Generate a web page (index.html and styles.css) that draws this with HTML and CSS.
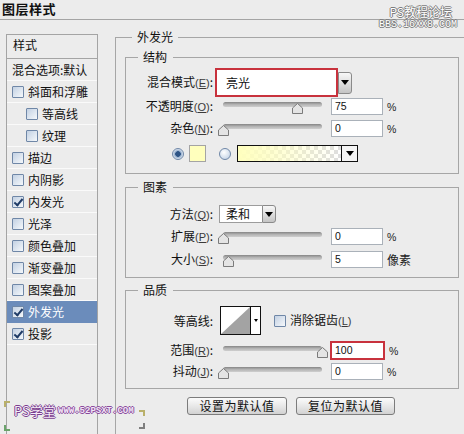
FILE: index.html
```html
<!DOCTYPE html>
<html lang="zh-CN">
<head>
<meta charset="utf-8">
<title>图层样式</title>
<link rel="stylesheet" href="styles.css">
</head>
<body>
<header class="titlebar"><h1 class="title">图层样式</h1></header>
<div class="wm-top"><span class="wm-l1">PS教程论坛</span><span class="wm-l2">BBS.16XX8.COM</span></div>
<div class="main">
  <nav class="sidebar">
    <div class="side-head">样式</div>
    <div class="side-row blend">混合选项:默认</div>
    <div class="side-row"><span class="cb"></span>斜面和浮雕</div>
    <div class="side-row sub"><span class="cb"></span>等高线</div>
    <div class="side-row sub"><span class="cb"></span>纹理</div>
    <div class="side-row"><span class="cb"></span>描边</div>
    <div class="side-row"><span class="cb"></span>内阴影</div>
    <div class="side-row"><span class="cb on"></span>内发光</div>
    <div class="side-row"><span class="cb"></span>光泽</div>
    <div class="side-row"><span class="cb"></span>颜色叠加</div>
    <div class="side-row"><span class="cb"></span>渐变叠加</div>
    <div class="side-row"><span class="cb"></span>图案叠加</div>
    <div class="side-row active"><span class="cb on"></span>外发光</div>
    <div class="side-row"><span class="cb on"></span>投影</div>
  </nav>

  <fieldset class="outer">
    <legend class="lg-outer">外发光</legend>

    <fieldset class="group g-struct">
      <legend class="lg">结构</legend>
      <div class="row r-mode">
        <span class="lbl">混合模式<span class="mn">(<u>E</u>)</span>:</span>
        <span class="select hl">亮光</span><span class="dd dd-tall"><span class="tri"></span></span>
      </div>
      <div class="row r-17 mt1">
        <span class="lbl">不透明度<span class="mn">(<u>O</u>)</span>:</span>
        <span class="slider"><span class="track"></span><span class="thumb" style="left:77px"><svg width="11" height="11" viewBox="0 0 11 11"><polygon points="5.5,0.5 10.5,5 10.5,10.5 0.5,10.5 0.5,5" fill="#e4e4e4" stroke="#7b7b7b"/></svg></span></span>
        <span class="num">75</span><span class="unit">%</span>
      </div>
      <div class="row r-17 mt5">
        <span class="lbl">杂色<span class="mn">(<u>N</u>)</span>:</span>
        <span class="slider"><span class="track"></span><span class="thumb" style="left:3px"><svg width="11" height="11" viewBox="0 0 11 11"><polygon points="5.5,0.5 10.5,5 10.5,10.5 0.5,10.5 0.5,5" fill="#e4e4e4" stroke="#7b7b7b"/></svg></span></span>
        <span class="num">0</span><span class="unit">%</span>
      </div>
      <div class="row r-17 mt8 r-color">
        <span class="radio on"></span>
        <span class="swatch"></span>
        <span class="radio"></span>
        <span class="grad"><span class="grad-fill"></span><span class="grad-dd"><span class="tri"></span></span></span>
      </div>
    </fieldset>

    <fieldset class="group g-elem">
      <legend class="lg">图素</legend>
      <div class="row r-18 mt11">
        <span class="lbl">方法<span class="mn">(<u>Q</u>)</span>:</span>
        <span class="select sm">柔和</span><span class="dd dd-sm"><span class="tri"></span></span>
      </div>
      <div class="row r-17 mt5">
        <span class="lbl">扩展<span class="mn">(<u>P</u>)</span>:</span>
        <span class="slider"><span class="track"></span><span class="thumb" style="left:3px"><svg width="11" height="11" viewBox="0 0 11 11"><polygon points="5.5,0.5 10.5,5 10.5,10.5 0.5,10.5 0.5,5" fill="#e4e4e4" stroke="#7b7b7b"/></svg></span></span>
        <span class="num">0</span><span class="unit">%</span>
      </div>
      <div class="row r-17 mt6">
        <span class="lbl">大小<span class="mn">(<u>S</u>)</span>:</span>
        <span class="slider"><span class="track"></span><span class="thumb" style="left:8px"><svg width="11" height="11" viewBox="0 0 11 11"><polygon points="5.5,0.5 10.5,5 10.5,10.5 0.5,10.5 0.5,5" fill="#e4e4e4" stroke="#7b7b7b"/></svg></span></span>
        <span class="num">5</span><span class="unit cjk">像素</span>
      </div>
    </fieldset>

    <fieldset class="group g-qual">
      <legend class="lg">品质</legend>
      <div class="row r-29 mt9">
        <span class="lbl">等高线:</span>
        <span class="contour"><svg class="graph" width="29" height="27" viewBox="0 0 29 27"><rect width="29" height="27" fill="#fff"/><polygon points="0,27 29,0 29,27" fill="#a3a3a3"/></svg><span class="cdd"><span class="tri tri-sm"></span></span></span>
        <span class="cb cb-aa"></span><span class="aa">消除锯齿<span class="mn">(<u>L</u>)</span></span>
      </div>
      <div class="row r-19 mt6">
        <span class="lbl">范围<span class="mn">(<u>R</u>)</span>:</span>
        <span class="slider"><span class="track"></span><span class="thumb" style="left:102px"><svg width="11" height="11" viewBox="0 0 11 11"><polygon points="5.5,0.5 10.5,5 10.5,10.5 0.5,10.5 0.5,5" fill="#e4e4e4" stroke="#7b7b7b"/></svg></span></span>
        <span class="num hl-num">100</span><span class="unit">%</span>
      </div>
      <div class="row r-17 mt3">
        <span class="lbl">抖动<span class="mn">(<u>J</u>)</span>:</span>
        <span class="slider"><span class="track"></span><span class="thumb" style="left:3px"><svg width="11" height="11" viewBox="0 0 11 11"><polygon points="5.5,0.5 10.5,5 10.5,10.5 0.5,10.5 0.5,5" fill="#e4e4e4" stroke="#7b7b7b"/></svg></span></span>
        <span class="num">0</span><span class="unit">%</span>
      </div>
    </fieldset>

    <div class="btnrow">
      <span class="btn">设置为默认值</span>
      <span class="btn btn2">复位为默认值</span>
    </div>
  </fieldset>
</div>

<div class="wm-bottom">
  <span class="mark mark-tl"></span>
  <span class="mark mark-bl"></span>
  <span class="wm-ps">PS学堂</span>
  <span class="wm-url">WWW.52PSXT.COM</span>
  <span class="mark mark-tr"></span>
  <span class="mark mark-br"></span>
</div>
</body>
</html>
```

FILE: styles.css
```css
* { box-sizing: border-box; margin: 0; padding: 0; }

html, body {
  width: 464px;
  height: 434px;
  overflow: hidden;
  background: #ececec;
}

body {
  position: relative;
  font-family: "Noto Sans CJK SC", "Noto Sans", sans-serif;
  font-size: 12px;
  line-height: 14px;
  color: #111;
}

/* title bar */
.titlebar {
  height: 20px;
  border-bottom: 1px solid #a4a4a4;
  padding: 0 0 0 2px;
}
.title {
  font-size: 13px;
  font-weight: bold;
  line-height: 17px;
  letter-spacing: 0.5px;
}

/* watermarks */
.wm-top {
  position: absolute;
  top: 4px;
  right: 7px;
  display: flex;
  flex-direction: column;
  align-items: flex-end;
  color: #fff;
  text-shadow: 1px 0 #7d7d7d, -1px 0 #7d7d7d, 0 1px #7d7d7d, 0 -1px #7d7d7d;
}
.wm-l1 { font-size: 12px; line-height: 15px; padding-right: 5px; }
.wm-l2 { font-family: "Liberation Mono", monospace; font-size: 10px; line-height: 11px; }

.wm-bottom {
  position: absolute;
  left: 4px;
  top: 400px;
  width: 140px;
  height: 32px;
}
.wm-ps {
  position: absolute;
  left: 10px;
  top: 3px;
  font-size: 13px;
  line-height: 15px;
  color: #f5ecf8;
  text-shadow: 1px 0 #7b3f90, -1px 0 #7b3f90, 0 1px #7b3f90, 0 -1px #7b3f90;
}
.wm-url {
  position: absolute;
  left: 54px;
  top: 6px;
  font-family: "Liberation Mono", monospace;
  font-weight: bold;
  font-size: 9px;
  line-height: 10px;
  color: #f1e6f6;
  text-shadow: 1px 0 #8a4a9d, -1px 0 #8a4a9d, 0 1px #8a4a9d, 0 -1px #8a4a9d;
}
.mark { position: absolute; width: 6px; height: 6px; }
.mark-tl { left: 0; top: 1px; border-top: 2px solid #b9b06a; border-left: 2px solid #b9b06a; }
.mark-bl { left: 0; top: 25px; border-bottom: 2px solid #6aa36a; border-left: 2px solid #6aa36a; }
.mark-tr { left: 135px; top: 10px; border-top: 2px solid #b9b06a; border-right: 2px solid #b9b06a; }
.mark-br { left: 135px; top: 23px; border-bottom: 2px solid #7e7e7e; border-right: 2px solid #7e7e7e; }

/* layout */
.main {
  display: flex;
  align-items: flex-start;
}

/* sidebar */
.sidebar {
  flex: none;
  width: 92px;
  height: 400px;
  margin: 14px 0 0 6px;
  border: 1px solid #a4a4a4;
  border-bottom: 0;
}
.side-head {
  height: 24px;
  line-height: 20px;
  padding-left: 6px;
  border-bottom: 1px solid #a4a4a4;
}
.side-row {
  display: flex;
  align-items: center;
  height: 22px;
  padding-left: 5px;
  border-bottom: 1px solid #fafafa;
  white-space: nowrap;
}
.side-row.sub { padding-left: 19px; }
.side-row.active { background: #6b8cbb; color: #fff; border-bottom-color: #6b8cbb; }

/* checkbox */
.cb {
  position: relative;
  flex: none;
  width: 12px;
  height: 12px;
  margin-right: 4px;
  border: 1px solid #6f87a7;
  border-radius: 1px;
  background: linear-gradient(135deg, #c3d1e3, #f5f8fb);
}
.cb.on::after {
  content: "";
  position: absolute;
  left: 3px;
  top: 0;
  width: 3px;
  height: 7px;
  border-right: 2px solid #1f3b66;
  border-bottom: 2px solid #1f3b66;
  transform: rotate(40deg);
}

/* fieldsets */
.outer {
  flex: none;
  width: 349px;
  min-inline-size: 0;
  margin: 10px 0 0 17px;
  padding: 0 5px 19px 9px;
  border: 1px solid #a6a6a6;
  border-right: 0;
  border-bottom: 0;
}
.lg-outer {
  margin-left: 7px;
  padding: 0 5px;
  line-height: 14px;
}
.group {
  width: 334px;
  min-inline-size: 0;
  padding: 0;
  border: 1px solid #a6a6a6;
}
.lg {
  margin-left: 12px;
  padding: 0 6px 0 5px;
  line-height: 14px;
}
.g-struct { margin-top: 6px; padding-bottom: 11px; }
.g-elem { margin-top: 6px; padding-bottom: 9px; }
.g-qual { margin-top: 5px; padding-bottom: 8px; }

/* rows */
.row { display: flex; align-items: center; }
.r-mode { height: 29px; margin-top: 4px; }
.r-17 { height: 17px; }
.r-18 { height: 18px; }
.r-19 { height: 19px; }
.r-29 { height: 29px; }
.mt1 { margin-top: 1px; }
.mt3 { margin-top: 3px; }
.mt5 { margin-top: 5px; }
.mt6 { margin-top: 6px; }
.mt8 { margin-top: 8px; }
.mt9 { margin-top: 9px; }
.mt11 { margin-top: 11px; }

.lbl {
  flex: none;
  width: 89px;
  padding-right: 2px;
  text-align: right;
  white-space: nowrap;
}
.mn {
  font-family: "Liberation Sans", sans-serif;
  font-size: 11px;
  color: #3a3a3a;
}

/* select */
.select {
  flex: none;
  background: #fff;
  white-space: nowrap;
}
.select.hl {
  width: 123px;
  height: 29px;
  border: 2px solid #c8323d;
  padding-left: 9px;
  line-height: 25px;
}
.select.sm {
  width: 43px;
  height: 18px;
  margin-left: 4px;
  border: 1px solid #9c9c9c;
  border-right: 0;
  padding-left: 6px;
  line-height: 16px;
}
.dd {
  flex: none;
  display: flex;
  align-items: center;
  justify-content: center;
  width: 14px;
  border: 1px solid #8a8a8a;
  border-radius: 0 3px 3px 0;
  background: linear-gradient(#f7f7f7, #dcdcdc 55%, #c4c4c4);
}
.dd-tall { height: 22px; }
.dd-sm { height: 18px; }
.tri {
  width: 0;
  height: 0;
  border-left: 4px solid transparent;
  border-right: 4px solid transparent;
  border-top: 5px solid #000;
}
.tri-sm {
  border-left-width: 2px;
  border-right-width: 2px;
  border-top-width: 3px;
}

/* slider */
.slider {
  position: relative;
  flex: none;
  width: 112px;
  height: 17px;
}
.track {
  display: block;
  height: 5px;
  margin: 4px 5px 0 8px;
  border-radius: 3px;
  background: linear-gradient(#858585, #b4b4b4 50%, #cfcfcf);
}
.thumb {
  position: absolute;
  top: 5px;
  width: 11px;
  height: 11px;
  line-height: 0;
}

/* numeric input */
.num {
  flex: none;
  width: 52px;
  height: 17px;
  margin-left: 4px;
  padding-left: 3px;
  border: 1px solid #aab1b9;
  background: #fff;
  font-family: "Liberation Sans", sans-serif;
  font-size: 10.5px;
  line-height: 15px;
  color: #111;
}
.num.hl-num {
  width: 55px;
  height: 19px;
  margin-left: 3px;
  padding-left: 3px;
  border: 2px solid #c8323d;
  line-height: 15px;
}
.unit {
  margin-left: 4px;
  font-family: "Liberation Sans", sans-serif;
  font-size: 10.5px;
  color: #222;
}
.unit.cjk {
  font-family: "Noto Sans CJK SC", sans-serif;
  font-size: 12px;
}

/* colour row */
.r-color { padding-left: 46px; }
.radio {
  flex: none;
  width: 12px;
  height: 12px;
  margin-left: 13px;
  border: 1px solid #6f87a7;
  border-radius: 50%;
  background: radial-gradient(circle at 40% 35%, #ffffff, #b9cbe2);
}
.radio.on {
  margin-left: 0;
  background: radial-gradient(circle, #2d5485 0 2.5px, #8fa9c9 3px, #dde6f1 5px);
}
.swatch {
  flex: none;
  width: 17px;
  height: 17px;
  margin-left: 5px;
  border: 1px solid #a4a4a4;
  background: #ffffbd;
}
.grad {
  flex: none;
  display: flex;
  width: 121px;
  height: 17px;
  margin-left: 6px;
  border: 1px solid #111;
}
.grad-fill {
  flex: 1;
  background:
    linear-gradient(to right, #ffffbe, rgba(255, 255, 190, 0.7) 35%, rgba(255, 255, 190, 0)),
    conic-gradient(#dedede 25%, #ffffff 0 50%, #dedede 0 75%, #ffffff 0) 0 0 / 8px 8px;
}
.grad-dd {
  flex: none;
  display: flex;
  align-items: center;
  justify-content: center;
  width: 16px;
  border-left: 1px solid #111;
  background: #f4f4f4;
}

/* contour */
.contour {
  flex: none;
  display: flex;
  width: 41px;
  height: 29px;
  margin-left: 5px;
  border: 1px solid #111;
  background: #fff;
}
.graph { display: block; }
.cdd {
  flex: 1;
  display: flex;
  align-items: center;
  justify-content: center;
  border-left: 1px solid #111;
}
.cb-aa { margin-left: 13px; }
.aa { white-space: nowrap; }

/* buttons */
.btnrow {
  display: flex;
  gap: 9px;
  margin-top: 8px;
  padding-left: 62px;
}
.btn {
  flex: none;
  width: 100px;
  height: 18px;
  border: 1px solid #7c7c7c;
  border-radius: 3px;
  background: linear-gradient(#fbfbfb, #e8e8e8 50%, #d2d2d2);
  text-align: center;
  line-height: 16px;
  letter-spacing: 0.5px;
}
.btn2 { width: 99px; }
```
